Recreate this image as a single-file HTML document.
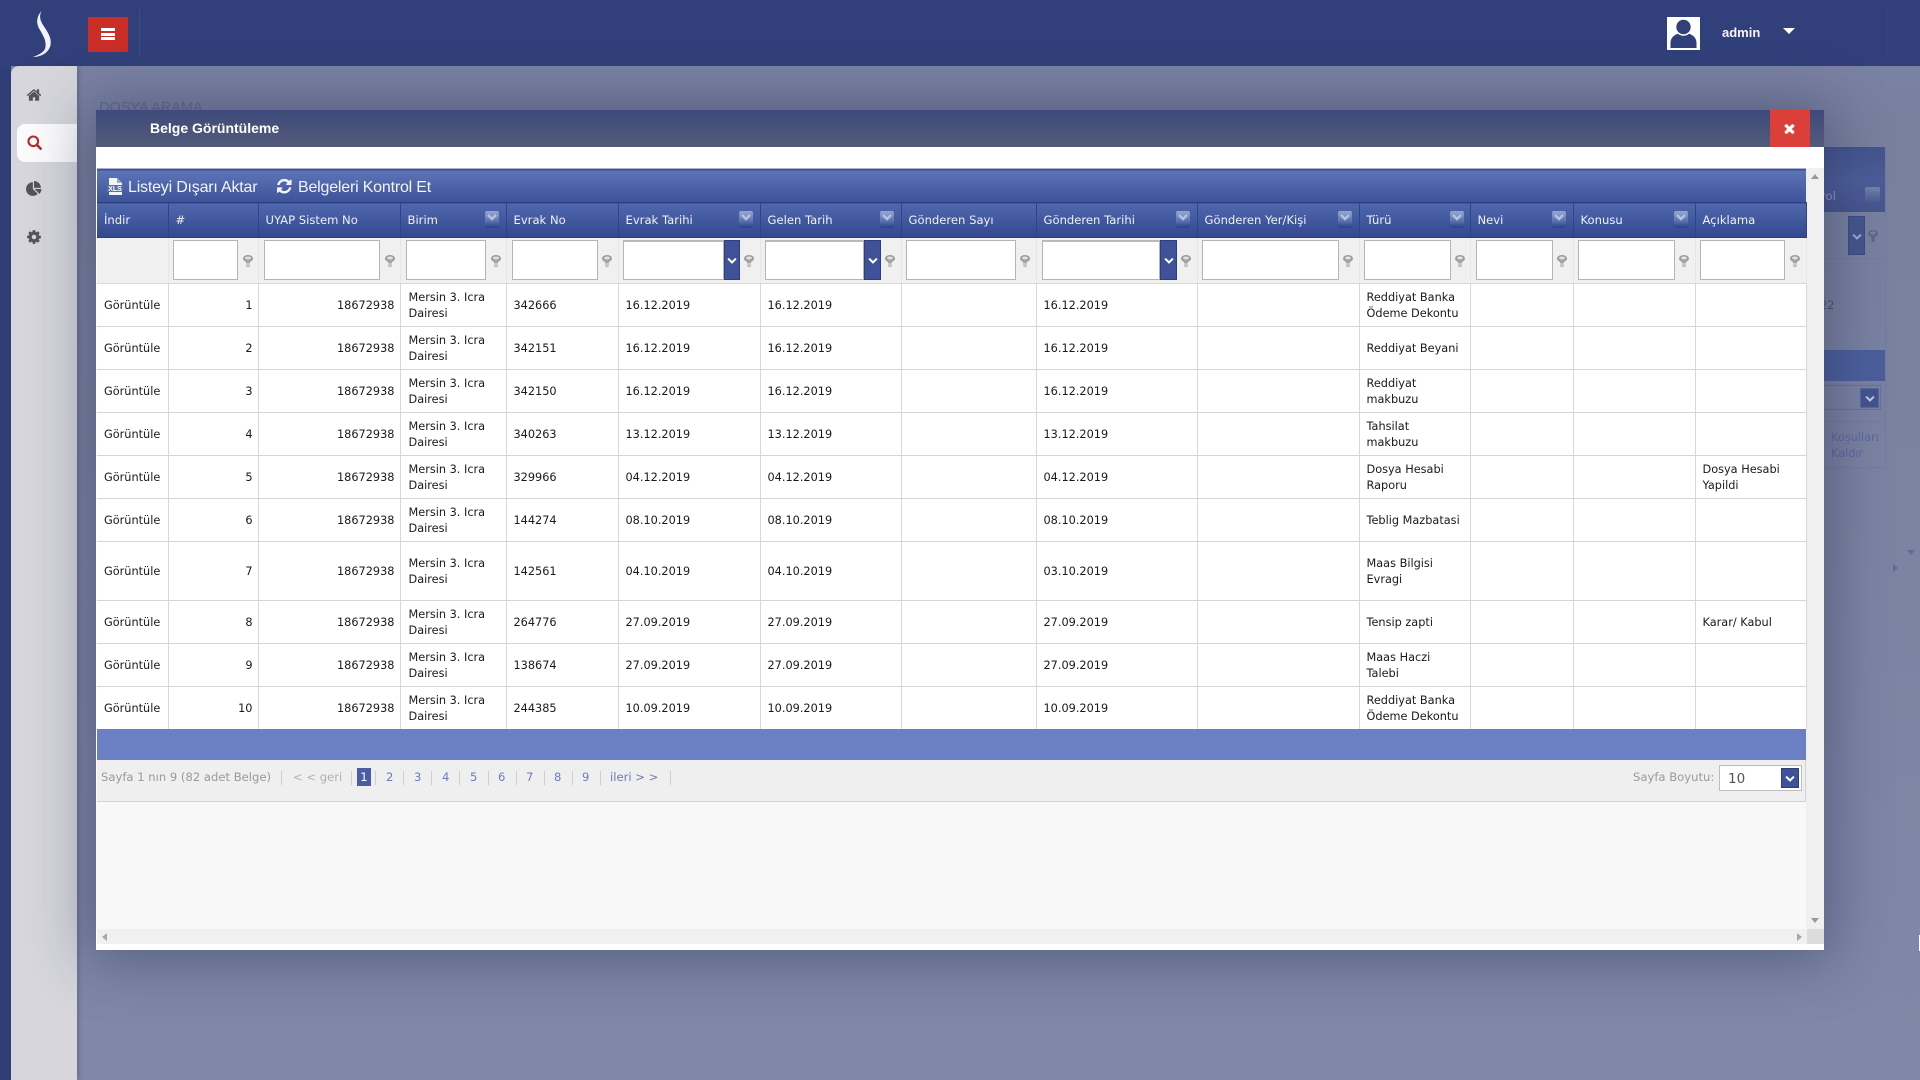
<!DOCTYPE html>
<html lang="tr">
<head>
<meta charset="utf-8">
<title>Belge Görüntüleme</title>
<style>
html,body{margin:0;padding:0;width:1920px;height:1080px;overflow:hidden;background:#8289aa;font-family:"DejaVu Sans","Liberation Sans",sans-serif}
*{box-sizing:border-box}
.a{position:absolute}
#bg{left:77px;top:66px;width:1843px;height:1014px;background:linear-gradient(180deg,#7a82a4 0,#78809f 60px,#8088a9 100%)}
#top{left:0;top:0;width:1920px;height:66px;background:#31407a}
#leftstrip{left:0;top:66px;width:11px;height:1014px;background:#303e78}
#side{left:11px;top:66px;width:66px;height:1014px;background:#d6d6dc;border-top-left-radius:8px;box-shadow:2px 0 4px rgba(40,40,60,.25)}
#act{left:17px;top:124px;width:60px;height:38px;background:#fbfbfc;border-radius:8px 0 0 8px}
#modal{left:96px;top:110px;width:1728px;height:840px;background:#fff;box-shadow:0 3px 55px 6px rgba(35,40,75,.44)}
#mh{left:96px;top:110px;width:1728px;height:37px;background:linear-gradient(180deg,#3d4a7b,#525b79)}
#mt{left:150px;top:120px;font:bold 14px/16px "Liberation Sans",sans-serif;color:#fff}
#close{left:1770px;top:110px;width:40px;height:37px;background:#dc3f3a}
#tb{left:97px;top:168px;width:1709px;height:34px;border-top:1px solid #a8b2d0;background:linear-gradient(180deg,#3c5094 0,#3c5094 1px,#5d74b9 2px,#3e5399 100%)}
.tt{top:177.5px;font:16px/20px "Liberation Sans",sans-serif;letter-spacing:-.2px;color:#f2f4fa;white-space:nowrap}
#grid{left:97px;top:202px;width:1709px;border-collapse:collapse;table-layout:fixed;font-size:11.3px;color:#1a1a1a}
#grid th{height:35px;padding:0 7px;text-align:left;font-weight:normal;font-size:11.6px;color:#eef1f8;background:linear-gradient(180deg,#5068ae,#33478e);border-right:1px solid #2f4485;border-top:1px solid #2b3e80;border-bottom:1px solid #2b3e80;white-space:nowrap}
#grid tr.fl td{height:46px;background:#f0f0f0;border-right:1px solid #e6e6e6;border-bottom:1px solid #d8d8d8;padding:0}
#grid td{height:43px;padding:2px 7px 0;border-right:1px solid #d8d8d8;border-bottom:1px solid #d6d6d6;line-height:16px;background:#fff;white-space:nowrap}
#grid td.r{text-align:right;padding-right:5px}
#grid td:nth-child(4){padding-left:8px}
.in{position:absolute;top:240px;height:40px;background:#fff;border:1px solid #b4b4b4}
.dt{border-top:2px solid #b9b9b9}
.bt{position:absolute;top:240px;height:40px;background:#3f5198;border:1px solid #2f3f7e}
.bt svg{position:absolute;left:50%;top:50%;margin:-5px 0 0 -5px}
.f{position:absolute;top:255px}
.s{position:absolute;top:211px;width:14px;height:17px;border-radius:2px;background:linear-gradient(180deg,#96a9d0,#6b80b8 45%,#2b4087);display:block}
.s svg{position:absolute;left:2px;top:2px}
#fb{left:97px;top:729px;width:1709px;height:31px;background:#6b7fc4}
#pg{left:97px;top:760px;width:1709px;height:42px;background:#efefef;border-bottom:1px solid #d2d2d2;border-right:1px solid #d2d2d2}
.p{position:absolute;top:768px;font-size:11.6px;line-height:18px;color:#6b7db5;white-space:nowrap}
.g{color:#9a9a9a}
.sep{position:absolute;top:771px;width:1px;height:14px;background:#cfcfcf}
#cur{left:357px;top:768px;width:14px;height:18px;background:#4a5da3;color:#fff;text-align:center;font-size:11.6px;line-height:18px;position:absolute}
#fill{left:96px;top:802px;width:1710px;height:127px;background:#f8f8f8}
#vs{left:1806px;top:168px;width:18px;height:761px;background:#f0f0f0}
#hs{left:97px;top:929px;width:1710px;height:15px;background:#f0f0f0}
#cor{left:1807px;top:929px;width:17px;height:15px;background:#dcdcdc}
.tri{position:absolute;width:0;height:0}
</style>
</head>
<body>
<div class="a" id="bg"></div>
<div class="a" style="left:99px;top:100px;font:14.5px/17px 'Liberation Sans',sans-serif;color:#626a8e">DOSYA ARAMA</div>

<!-- panel behind the dialog -->
<div class="a" style="left:1700px;top:147px;width:186px;height:321px;border:1px solid #737ba0"></div>
<div class="a" style="left:1700px;top:147px;width:185px;height:31px;background:linear-gradient(180deg,#44548f,#4c5c97)"></div>
<div class="a" style="left:1700px;top:178px;width:185px;height:34px;background:linear-gradient(180deg,#4d5e9a,#46558f)"></div>
<div class="a" style="left:1795px;top:188px;font-size:11.6px;line-height:16px;color:#939fc6">Kontrol</div>
<div class="a" style="left:1865px;top:187px;width:15px;height:17px;border-radius:2px;background:linear-gradient(180deg,#7584ad,#47558e)"></div>
<div class="a" style="left:1848px;top:216px;width:17px;height:39px;background:#46558f;border:1px solid #3d4b84"><svg style="position:absolute;left:3px;top:14px" width="10" height="10" viewBox="0 0 1792 1792"><path fill="#a2acd0" d="M1683 808l-742 741q-19 19-45 19t-45-19l-742-741q-19-19-19-45.5t19-45.5l166-165q19-19 45-19t45 19l531 531 531-531q19-19 45-19t45 19l166 165q19 19 19 45.5t-19 45.5z"/></svg></div>
<svg class="a" style="left:1868px;top:230px" width="10" height="12" viewBox="0 0 10 12"><ellipse cx="5" cy="3.500" rx="5" ry="3.500" fill="#5f6789"/><path d="M1 5L3.500 8V12H6.500V8L9 5Z" fill="#5f6789"/><ellipse cx="5" cy="3" rx="3" ry="1.500" fill="#79819f"/></svg>
<div class="a" style="left:1700px;top:258px;width:186px;height:1px;background:#737ba0"></div>
<div class="a" style="left:1777px;top:298px;font-size:11.3px;line-height:16px;color:#4d5477">18672922</div>
<div class="a" style="left:1700px;top:350px;width:185px;height:31px;background:#4c5f9c"></div>
<div class="a" style="left:1700px;top:385px;width:181px;height:25px;border:1px solid #6a7298"></div>
<div class="a" style="left:1860px;top:388px;width:19px;height:20px;background:#44548f;border:1px solid #5c6898"><svg style="position:absolute;left:4px;top:4px" width="10" height="10" viewBox="0 0 1792 1792"><path fill="#c4cce4" d="M1683 808l-742 741q-19 19-45 19t-45-19l-742-741q-19-19-19-45.5t19-45.5l166-165q19-19 45-19t45 19l531 531 531-531q19-19 45-19t45 19l166 165q19 19 19 45.5t-19 45.5z"/></svg></div>
<div class="a" style="left:1700px;top:421px;width:186px;height:1px;background:#737ba0"></div>
<div class="a" style="left:1831px;top:430px;font-size:11.3px;line-height:16px;color:#5a68a4">Koşulları<br>Kaldır</div>
<div class="tri" style="left:1907px;top:550px;border-left:4px solid transparent;border-right:4px solid transparent;border-top:5px solid #636b8e"></div>
<div class="tri" style="left:1893px;top:564px;border-top:4px solid transparent;border-bottom:4px solid transparent;border-left:5px solid #636b8e"></div>
<div class="a" style="left:1919px;top:935px;width:1px;height:16px;background:#fff"></div>

<!-- top bar -->
<div class="a" id="top"></div>
<svg class="a" style="left:0;top:0" width="70" height="66"><path fill="#f2f4fb" d="M41.500 11C36 17 36 24 40 30C44 37 47 42 45 49C43 53 38 55 33 57C40 57 47 54 50 47C53 39 47 31 43 25C40 20 39 16 41.500 11Z"/></svg>
<div class="a" style="left:88px;top:17px;width:40px;height:35px;background:#cb2d27"></div>
<div class="a" style="left:101px;top:28px;width:14px;height:3px;background:#fff"></div>
<div class="a" style="left:101px;top:33px;width:14px;height:3px;background:#fff"></div>
<div class="a" style="left:101px;top:37px;width:14px;height:3px;background:#fff"></div>
<div class="a" style="left:139px;top:10px;width:1px;height:46px;background:#3d4c85"></div>
<div class="a" style="left:1667px;top:17px;width:33px;height:33px;background:#fff"></div>
<svg class="a" style="left:1667px;top:17px" width="33" height="33" viewBox="0 0 33 33"><circle cx="16.500" cy="10" r="7.200" fill="#31407a"/><path fill="#31407a" d="M3.500 31V26C3.500 21 7 18 11 16.800C14 19.500 19 19.500 22 16.800C26 18 29.500 21 29.500 26V31Z"/></svg>
<div class="a" style="left:1722px;top:25px;font:bold 13px/16px 'Liberation Sans',sans-serif;color:#f4f5fa">admin</div>
<div class="tri" style="left:1783px;top:28px;border-left:6px solid transparent;border-right:6px solid transparent;border-top:6px solid #fff"></div>
<div class="a" style="left:1886px;top:8px;width:1px;height:48px;background:#3a4880"></div>

<!-- sidebar -->
<div class="a" id="leftstrip"></div>
<div class="a" id="side"></div>
<div class="a" id="act"></div>
<svg class="a" style="left:26px;top:87px" width="16" height="16" viewBox="0 0 1792 1792"><path fill="#555" d="M1472 992v480q0 26-19 45t-45 19h-384v-384h-256v384h-384q-26 0-45-19t-19-45v-480q0-1 .5-3t.5-3l575-474 575 474q1 2 1 6zm223-69l-62 74q-8 9-21 11h-3q-13 0-21-7l-692-577-692 577q-12 8-24 7-13-2-21-11l-62-74q-8-10-7-23.5t11-21.5l719-599q32-26 76-26t76 26l244 204v-195q0-14 9-23t23-9h192q14 0 23 9t9 23v408l219 182q10 8 11 21.5t-7 23.5z"/></svg>
<svg class="a" style="left:27px;top:135px" width="15" height="15" viewBox="0 0 15 15"><circle cx="6.300" cy="6.300" r="4.800" fill="none" stroke="#b8282e" stroke-width="2.100"/><path d="M9.800 9.800L13.700 13.700" stroke="#b8282e" stroke-width="2.500" stroke-linecap="round"/></svg>
<svg class="a" style="left:26px;top:181px" width="16" height="16" viewBox="0 0 1792 1792"><path fill="#555" d="M768 890l546 546q-106 108-247.5 168t-298.5 60q-209 0-385.5-103t-279.5-279.5-103-385.5 103-385.5 279.5-279.5 385.5-103v762zm187 6h773q0 157-60 298.5t-168 247.5zm709-128h-768v-768q209 0 385.5 103t279.5 279.5 103 385.5z"/></svg>
<svg class="a" style="left:26px;top:229px" width="16" height="16" viewBox="0 0 1792 1792"><path fill="#555" d="M1152 896q0-106-75-181t-181-75-181 75-75 181 75 181 181 75 181-75 75-181zm512-109v222q0 12-8 23t-20 13l-185 28q-19 54-39 91 35 50 107 138 10 12 10 25t-9 23q-27 37-99 108t-94 71q-12 0-26-9l-138-108q-44 23-91 38-16 136-29 186-7 28-36 28h-222q-14 0-24.5-8.5t-11.5-21.5l-28-184q-49-16-90-37l-141 107q-10 9-25 9-14 0-25-11-126-114-165-168-7-10-7-23 0-12 8-23 15-21 51-66.5t54-70.5q-27-50-41-99l-183-27q-13-2-21-12.5t-8-23.5v-222q0-12 8-23t19-13l186-28q14-46 39-92-40-57-107-138-10-12-10-24 0-10 9-23 26-36 98.5-107.5t94.5-71.5q13 0 26 10l138 107q44-23 91-38 16-136 29-186 7-28 36-28h222q14 0 24.5 8.500t11.5 21.5l28 184q49 16 90 37l142-107q9-9 24-9 13 0 25 10 129 119 165 170 7 8 7 22 0 12-8 23-15 21-51 66.5t-54 70.5q26 50 41 98l183 28q13 2 21 12.5t8 23.5z"/></svg>

<!-- dialog -->
<div class="a" id="modal"></div>
<div class="a" id="mh"></div>
<div class="a" id="mt">Belge Görüntüleme</div>
<div class="a" id="close"><svg style="position:absolute;left:12px;top:11px" width="15" height="15" viewBox="0 0 1792 1792"><path fill="#fff" d="M1490 1322q0 40-28 68l-136 136q-28 28-68 28t-68-28l-294-294-294 294q-28 28-68 28t-68-28l-136-136q-28-28-28-68t28-68l294-294-294-294q-28-28-28-68t28-68l136-136q28-28 68-28t68 28l294 294 294-294q28-28 68-28t68 28l136 136q28 28 28 68t-28 68l-294 294 294 294q28 28 28 68z"/></svg></div>

<div class="a" id="vs"></div>
<div class="tri" style="left:1811px;top:174px;border-left:4px solid transparent;border-right:4px solid transparent;border-bottom:5px solid #999"></div>
<div class="tri" style="left:1811px;top:918px;border-left:4px solid transparent;border-right:4px solid transparent;border-top:5px solid #999"></div>

<div class="a" id="tb"></div>
<svg class="a" style="left:107px;top:178px" width="16" height="18" viewBox="0 0 16 18"><path fill="#f2f4fa" d="M2 0H10L15 5V17H2Z"/><path fill="#9aa8d0" d="M10 0V5H15Z"/><rect x="0" y="7" width="16" height="7" fill="#5a6ea8"/><text x="8" y="13" font-family="Liberation Sans" font-size="7" font-weight="bold" fill="#fff" text-anchor="middle">XLS</text></svg>
<div class="a tt" style="left:128px">Listeyi Dışarı Aktar</div>
<svg class="a" style="left:277px;top:178px" width="17" height="17" viewBox="0 0 1792 1792"><path fill="#f2f4fa" d="M1511 1024q0 5-1 7-64 268-268 434.5t-478 166.5q-146 0-282.5-55t-243.5-157l-129 129q-19 19-45 19t-45-19-19-45v-448q0-26 19-45t45-19h448q26 0 45 19t19 45-19 45l-137 137q71 66 161 102t187 36q134 0 250-65t186-179q11-17 53-117 8-23 30-23h192q13 0 22.5 9.5t9.5 22.5zm25-800v448q0 26-19 45t-45 19h-448q-26 0-45-19t-19-45 19-45l138-138q-148-137-349-137-134 0-250 65t-186 179q-11 17-53 117-8 23-30 23h-199q-13 0-22.5-9.5t-9.5-22.5v-7q65-268 270-434.5t480-166.5q146 0 284 55.5t245 156.5l130-129q19-19 45-19t45 19 19 45z"/></svg>
<div class="a tt" style="left:298px">Belgeleri Kontrol Et</div>

<table class="a" id="grid">
<colgroup><col style="width:71px"><col style="width:90px"><col style="width:142px"><col style="width:106px"><col style="width:112px"><col style="width:142px"><col style="width:141px"><col style="width:135px"><col style="width:161px"><col style="width:162px"><col style="width:111px"><col style="width:103px"><col style="width:122px"><col style="width:111px"></colgroup>
<tr><th>İndir</th><th>#</th><th>UYAP Sistem No</th><th>Birim</th><th>Evrak No</th><th>Evrak Tarihi</th><th>Gelen Tarih</th><th>Gönderen Sayı</th><th>Gönderen Tarihi</th><th>Gönderen Yer/Kişi</th><th>Türü</th><th>Nevi</th><th>Konusu</th><th>Açıklama</th></tr>
<tr class="fl"><td></td><td></td><td></td><td></td><td></td><td></td><td></td><td></td><td></td><td></td><td></td><td></td><td></td><td></td></tr>
<tr><td>Görüntüle</td><td class="r">1</td><td class="r">18672938</td><td>Mersin 3. Icra<br>Dairesi</td><td>342666</td><td>16.12.2019</td><td>16.12.2019</td><td></td><td>16.12.2019</td><td></td><td>Reddiyat Banka<br>Ödeme Dekontu</td><td></td><td></td><td></td></tr>
<tr><td>Görüntüle</td><td class="r">2</td><td class="r">18672938</td><td>Mersin 3. Icra<br>Dairesi</td><td>342151</td><td>16.12.2019</td><td>16.12.2019</td><td></td><td>16.12.2019</td><td></td><td>Reddiyat Beyani</td><td></td><td></td><td></td></tr>
<tr><td>Görüntüle</td><td class="r">3</td><td class="r">18672938</td><td>Mersin 3. Icra<br>Dairesi</td><td>342150</td><td>16.12.2019</td><td>16.12.2019</td><td></td><td>16.12.2019</td><td></td><td>Reddiyat<br>makbuzu</td><td></td><td></td><td></td></tr>
<tr><td>Görüntüle</td><td class="r">4</td><td class="r">18672938</td><td>Mersin 3. Icra<br>Dairesi</td><td>340263</td><td>13.12.2019</td><td>13.12.2019</td><td></td><td>13.12.2019</td><td></td><td>Tahsilat<br>makbuzu</td><td></td><td></td><td></td></tr>
<tr><td>Görüntüle</td><td class="r">5</td><td class="r">18672938</td><td>Mersin 3. Icra<br>Dairesi</td><td>329966</td><td>04.12.2019</td><td>04.12.2019</td><td></td><td>04.12.2019</td><td></td><td>Dosya Hesabi<br>Raporu</td><td></td><td></td><td>Dosya Hesabi<br>Yapildi</td></tr>
<tr><td>Görüntüle</td><td class="r">6</td><td class="r">18672938</td><td>Mersin 3. Icra<br>Dairesi</td><td>144274</td><td>08.10.2019</td><td>08.10.2019</td><td></td><td>08.10.2019</td><td></td><td>Teblig Mazbatasi</td><td></td><td></td><td></td></tr>
<tr><td style="height:59px">Görüntüle</td><td class="r">7</td><td class="r">18672938</td><td>Mersin 3. Icra<br>Dairesi</td><td>142561</td><td>04.10.2019</td><td>04.10.2019</td><td></td><td>03.10.2019</td><td></td><td>Maas Bilgisi<br>Evragi</td><td></td><td></td><td></td></tr>
<tr><td>Görüntüle</td><td class="r">8</td><td class="r">18672938</td><td>Mersin 3. Icra<br>Dairesi</td><td>264776</td><td>27.09.2019</td><td>27.09.2019</td><td></td><td>27.09.2019</td><td></td><td>Tensip zapti</td><td></td><td></td><td>Karar/ Kabul</td></tr>
<tr><td>Görüntüle</td><td class="r">9</td><td class="r">18672938</td><td>Mersin 3. Icra<br>Dairesi</td><td>138674</td><td>27.09.2019</td><td>27.09.2019</td><td></td><td>27.09.2019</td><td></td><td>Maas Haczi<br>Talebi</td><td></td><td></td><td></td></tr>
<tr><td>Görüntüle</td><td class="r">10</td><td class="r">18672938</td><td>Mersin 3. Icra<br>Dairesi</td><td>244385</td><td>10.09.2019</td><td>10.09.2019</td><td></td><td>10.09.2019</td><td></td><td>Reddiyat Banka<br>Ödeme Dekontu</td><td></td><td></td><td></td></tr>
</table>

<!-- sort icons -->
<i class="s" style="left:485px"><svg width="10" height="10" viewBox="0 0 10 10"><path d="M1 2L5 6L9 2" fill="none" stroke="#b5c2de" stroke-width="2.500"/></svg></i>
<i class="s" style="left:739px"><svg width="10" height="10" viewBox="0 0 10 10"><path d="M1 2L5 6L9 2" fill="none" stroke="#b5c2de" stroke-width="2.500"/></svg></i>
<i class="s" style="left:880px"><svg width="10" height="10" viewBox="0 0 10 10"><path d="M1 2L5 6L9 2" fill="none" stroke="#b5c2de" stroke-width="2.500"/></svg></i>
<i class="s" style="left:1176px"><svg width="10" height="10" viewBox="0 0 10 10"><path d="M1 2L5 6L9 2" fill="none" stroke="#b5c2de" stroke-width="2.500"/></svg></i>
<i class="s" style="left:1338px"><svg width="10" height="10" viewBox="0 0 10 10"><path d="M1 2L5 6L9 2" fill="none" stroke="#b5c2de" stroke-width="2.500"/></svg></i>
<i class="s" style="left:1450px"><svg width="10" height="10" viewBox="0 0 10 10"><path d="M1 2L5 6L9 2" fill="none" stroke="#b5c2de" stroke-width="2.500"/></svg></i>
<i class="s" style="left:1552px"><svg width="10" height="10" viewBox="0 0 10 10"><path d="M1 2L5 6L9 2" fill="none" stroke="#b5c2de" stroke-width="2.500"/></svg></i>
<i class="s" style="left:1674px"><svg width="10" height="10" viewBox="0 0 10 10"><path d="M1 2L5 6L9 2" fill="none" stroke="#b5c2de" stroke-width="2.500"/></svg></i>

<!-- filter inputs -->
<div class="in" style="left:173px;width:65px"></div>
<div class="in" style="left:264px;width:116px"></div>
<div class="in" style="left:406px;width:80px"></div>
<div class="in" style="left:512px;width:86px"></div>
<div class="in dt" style="left:623px;width:101px"></div>
<div class="bt" style="left:724px;width:16px"><svg width="10" height="10" viewBox="0 0 1792 1792"><path fill="#fff" d="M1683 808l-742 741q-19 19-45 19t-45-19l-742-741q-19-19-19-45.5t19-45.5l166-165q19-19 45-19t45 19l531 531 531-531q19-19 45-19t45 19l166 165q19 19 19 45.5t-19 45.5z"/></svg></div>
<div class="in dt" style="left:765px;width:99px"></div>
<div class="bt" style="left:864px;width:17px"><svg width="10" height="10" viewBox="0 0 1792 1792"><path fill="#fff" d="M1683 808l-742 741q-19 19-45 19t-45-19l-742-741q-19-19-19-45.5t19-45.5l166-165q19-19 45-19t45 19l531 531 531-531q19-19 45-19t45 19l166 165q19 19 19 45.5t-19 45.5z"/></svg></div>
<div class="in" style="left:906px;width:110px"></div>
<div class="in dt" style="left:1042px;width:118px"></div>
<div class="bt" style="left:1160px;width:17px"><svg width="10" height="10" viewBox="0 0 1792 1792"><path fill="#fff" d="M1683 808l-742 741q-19 19-45 19t-45-19l-742-741q-19-19-19-45.5t19-45.5l166-165q19-19 45-19t45 19l531 531 531-531q19-19 45-19t45 19l166 165q19 19 19 45.5t-19 45.5z"/></svg></div>
<div class="in" style="left:1202px;width:137px"></div>
<div class="in" style="left:1364px;width:87px"></div>
<div class="in" style="left:1476px;width:77px"></div>
<div class="in" style="left:1578px;width:97px"></div>
<div class="in" style="left:1700px;width:85px"></div>

<!-- filter funnels -->
<svg class="f" style="left:243px" width="10" height="12" viewBox="0 0 10 12"><ellipse cx="5" cy="3.500" rx="5" ry="3.500" fill="#9c9c9c"/><path d="M1 5L3.500 8V12H6.500V8L9 5Z" fill="#a4a4a4"/><ellipse cx="5" cy="3" rx="3" ry="1.500" fill="#e2e2e2"/><path d="M4.500 8V11.500H5.500V8Z" fill="#eee"/></svg>
<svg class="f" style="left:385px" width="10" height="12" viewBox="0 0 10 12"><ellipse cx="5" cy="3.500" rx="5" ry="3.500" fill="#9c9c9c"/><path d="M1 5L3.500 8V12H6.500V8L9 5Z" fill="#a4a4a4"/><ellipse cx="5" cy="3" rx="3" ry="1.500" fill="#e2e2e2"/><path d="M4.500 8V11.500H5.500V8Z" fill="#eee"/></svg>
<svg class="f" style="left:491px" width="10" height="12" viewBox="0 0 10 12"><ellipse cx="5" cy="3.500" rx="5" ry="3.500" fill="#9c9c9c"/><path d="M1 5L3.500 8V12H6.500V8L9 5Z" fill="#a4a4a4"/><ellipse cx="5" cy="3" rx="3" ry="1.500" fill="#e2e2e2"/><path d="M4.500 8V11.500H5.500V8Z" fill="#eee"/></svg>
<svg class="f" style="left:602px" width="10" height="12" viewBox="0 0 10 12"><ellipse cx="5" cy="3.500" rx="5" ry="3.500" fill="#9c9c9c"/><path d="M1 5L3.500 8V12H6.500V8L9 5Z" fill="#a4a4a4"/><ellipse cx="5" cy="3" rx="3" ry="1.500" fill="#e2e2e2"/><path d="M4.500 8V11.500H5.500V8Z" fill="#eee"/></svg>
<svg class="f" style="left:744px" width="10" height="12" viewBox="0 0 10 12"><ellipse cx="5" cy="3.500" rx="5" ry="3.500" fill="#9c9c9c"/><path d="M1 5L3.500 8V12H6.500V8L9 5Z" fill="#a4a4a4"/><ellipse cx="5" cy="3" rx="3" ry="1.500" fill="#e2e2e2"/><path d="M4.500 8V11.500H5.500V8Z" fill="#eee"/></svg>
<svg class="f" style="left:885px" width="10" height="12" viewBox="0 0 10 12"><ellipse cx="5" cy="3.500" rx="5" ry="3.500" fill="#9c9c9c"/><path d="M1 5L3.500 8V12H6.500V8L9 5Z" fill="#a4a4a4"/><ellipse cx="5" cy="3" rx="3" ry="1.500" fill="#e2e2e2"/><path d="M4.500 8V11.500H5.500V8Z" fill="#eee"/></svg>
<svg class="f" style="left:1020px" width="10" height="12" viewBox="0 0 10 12"><ellipse cx="5" cy="3.500" rx="5" ry="3.500" fill="#9c9c9c"/><path d="M1 5L3.500 8V12H6.500V8L9 5Z" fill="#a4a4a4"/><ellipse cx="5" cy="3" rx="3" ry="1.500" fill="#e2e2e2"/><path d="M4.500 8V11.500H5.500V8Z" fill="#eee"/></svg>
<svg class="f" style="left:1181px" width="10" height="12" viewBox="0 0 10 12"><ellipse cx="5" cy="3.500" rx="5" ry="3.500" fill="#9c9c9c"/><path d="M1 5L3.500 8V12H6.500V8L9 5Z" fill="#a4a4a4"/><ellipse cx="5" cy="3" rx="3" ry="1.500" fill="#e2e2e2"/><path d="M4.500 8V11.500H5.500V8Z" fill="#eee"/></svg>
<svg class="f" style="left:1343px" width="10" height="12" viewBox="0 0 10 12"><ellipse cx="5" cy="3.500" rx="5" ry="3.500" fill="#9c9c9c"/><path d="M1 5L3.500 8V12H6.500V8L9 5Z" fill="#a4a4a4"/><ellipse cx="5" cy="3" rx="3" ry="1.500" fill="#e2e2e2"/><path d="M4.500 8V11.500H5.500V8Z" fill="#eee"/></svg>
<svg class="f" style="left:1455px" width="10" height="12" viewBox="0 0 10 12"><ellipse cx="5" cy="3.500" rx="5" ry="3.500" fill="#9c9c9c"/><path d="M1 5L3.500 8V12H6.500V8L9 5Z" fill="#a4a4a4"/><ellipse cx="5" cy="3" rx="3" ry="1.500" fill="#e2e2e2"/><path d="M4.500 8V11.500H5.500V8Z" fill="#eee"/></svg>
<svg class="f" style="left:1557px" width="10" height="12" viewBox="0 0 10 12"><ellipse cx="5" cy="3.500" rx="5" ry="3.500" fill="#9c9c9c"/><path d="M1 5L3.500 8V12H6.500V8L9 5Z" fill="#a4a4a4"/><ellipse cx="5" cy="3" rx="3" ry="1.500" fill="#e2e2e2"/><path d="M4.500 8V11.500H5.500V8Z" fill="#eee"/></svg>
<svg class="f" style="left:1679px" width="10" height="12" viewBox="0 0 10 12"><ellipse cx="5" cy="3.500" rx="5" ry="3.500" fill="#9c9c9c"/><path d="M1 5L3.500 8V12H6.500V8L9 5Z" fill="#a4a4a4"/><ellipse cx="5" cy="3" rx="3" ry="1.500" fill="#e2e2e2"/><path d="M4.500 8V11.500H5.500V8Z" fill="#eee"/></svg>
<svg class="f" style="left:1790px" width="10" height="12" viewBox="0 0 10 12"><ellipse cx="5" cy="3.500" rx="5" ry="3.500" fill="#9c9c9c"/><path d="M1 5L3.500 8V12H6.500V8L9 5Z" fill="#a4a4a4"/><ellipse cx="5" cy="3" rx="3" ry="1.500" fill="#e2e2e2"/><path d="M4.500 8V11.500H5.500V8Z" fill="#eee"/></svg>

<div class="a" id="fb"></div>
<div class="a" id="pg"></div>
<div class="p g" style="left:101px">Sayfa 1 nın 9 (82 adet Belge)</div>
<div class="sep" style="left:281px"></div>
<div class="p g" style="left:293px;color:#b0b0b0">&lt; &lt; geri</div>
<div class="sep" style="left:351px"></div>
<div id="cur">1</div>
<div class="sep" style="left:375px"></div>
<div class="p" style="left:386px">2</div>
<div class="sep" style="left:403px"></div>
<div class="p" style="left:414px">3</div>
<div class="sep" style="left:431px"></div>
<div class="p" style="left:442px">4</div>
<div class="sep" style="left:459px"></div>
<div class="p" style="left:470px">5</div>
<div class="sep" style="left:488px"></div>
<div class="p" style="left:498px">6</div>
<div class="sep" style="left:516px"></div>
<div class="p" style="left:526px">7</div>
<div class="sep" style="left:544px"></div>
<div class="p" style="left:554px">8</div>
<div class="sep" style="left:572px"></div>
<div class="p" style="left:582px">9</div>
<div class="sep" style="left:600px"></div>
<div class="p" style="left:610px">ileri &gt; &gt;</div>
<div class="sep" style="left:670px"></div>
<div class="p g" style="left:1633px">Sayfa Boyutu:</div>
<div class="a" style="left:1719px;top:765px;width:83px;height:26px;background:#fff;border:1px solid #bdbdbd;font-size:13.5px;line-height:27px;padding-left:8px;color:#555">10</div>
<div class="a" style="left:1781px;top:768px;width:18px;height:20px;background:#3f5198;border:1px solid #2f3f7e"><svg style="position:absolute;left:3px;top:4px" width="10" height="10" viewBox="0 0 1792 1792"><path fill="#fff" d="M1683 808l-742 741q-19 19-45 19t-45-19l-742-741q-19-19-19-45.5t19-45.5l166-165q19-19 45-19t45 19l531 531 531-531q19-19 45-19t45 19l166 165q19 19 19 45.5t-19 45.5z"/></svg></div>

<div class="a" id="fill"></div>
<div class="a" id="hs"></div>
<div class="a" id="cor"></div>
<div class="tri" style="left:102px;top:933px;border-top:4px solid transparent;border-bottom:4px solid transparent;border-right:5px solid #a8a8a8"></div>
<div class="tri" style="left:1797px;top:933px;border-top:4px solid transparent;border-bottom:4px solid transparent;border-left:5px solid #a8a8a8"></div>
</body>
</html>
